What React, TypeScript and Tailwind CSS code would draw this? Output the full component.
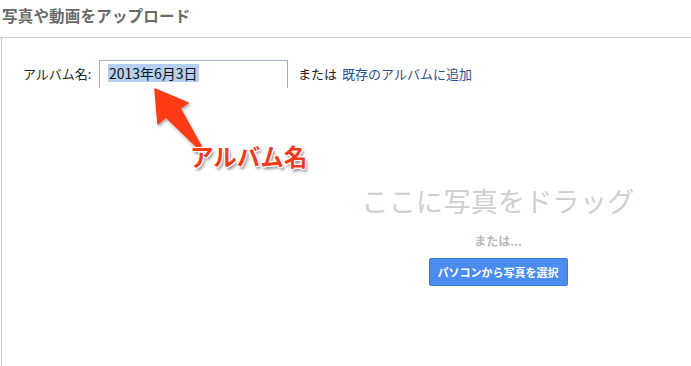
import React from "react";

export default function App() {
  const jp = { fontFamily: '"Noto Sans CJK JP", "Noto Sans", sans-serif' };
  return (
    <div className="relative w-[691px] h-[366px] bg-white overflow-hidden" style={jp}>
      <div className="h-[38px] border-b border-[#cccccc] pl-[2px] pt-[5px]">
        <h1 className="text-[15.5px] leading-[20px] font-bold text-[#6a6a6a] tracking-[0.2px]">写真や動画をアップロード</h1>
      </div>
      <div className="ml-[1px] h-[328px] border-l border-[#c4c4c4]">
        <div className="flex items-center pt-[22px] pl-[21px]">
          <span className="text-[13px] text-[#222] w-[76px]">アルバム名:</span>
          <div className="w-[189px] h-[28px] border-t border-x border-[#9fb0c8] pl-[8px] pt-[3px] flex items-start">
            <span className="bg-[#b5d0f0] text-[14px] leading-[18px] text-[#111] px-[1px]">2013年6月3日</span>
          </div>
          <span className="ml-[10px] text-[13px] text-[#222]">または</span>
          <span className="ml-[5px] text-[13px] text-[#2a4e8f]">既存のアルバムに追加</span>
        </div>
        <div className="flex flex-col items-center pl-[303px] mt-[96px]">
          <div className="text-[27px] leading-[34px] text-[#cfcfcf] tracking-[0.3px]">ここに写真をドラッグ</div>
          <div className="mt-[16px] text-[12px] leading-[14px] font-bold text-[#b8b8b8]">または...</div>
          <button className="mt-[10px] w-[139px] h-[28px] rounded-[2px] bg-[#4a8cf0] border border-[#3b78d8] text-white text-[11px] font-bold">
            パソコンから写真を選択
          </button>
        </div>
      </div>
      <svg className="absolute left-0 top-0 pointer-events-none" width="691" height="366">
        <defs>
          <filter id="sh" x="-20%" y="-20%" width="140%" height="140%">
            <feDropShadow dx="1" dy="2" stdDeviation="1.5" floodColor="#000" floodOpacity="0.35" />
          </filter>
        </defs>
        <polygon
          points="155,89 188,103 180,108 201,146 197,147 166,117 158,124"
          fill="#ff3b17"
          stroke="#ff3b17"
          strokeLinejoin="round"
          strokeWidth="1.5"
          filter="url(#sh)"
        />
      </svg>
      <div
        className="absolute left-[190px] top-[140px] text-[23.5px] leading-[32px] font-bold text-[#f2391c] [text-shadow:0_0_1px_#fff,1px_1px_0_#fff,-1px_-1px_0_#fff,1px_-1px_0_#fff,-1px_1px_0_#fff,2px_3px_3px_rgba(0,0,0,0.45)]"
      >
        アルバム名
      </div>
    </div>
  );
}
